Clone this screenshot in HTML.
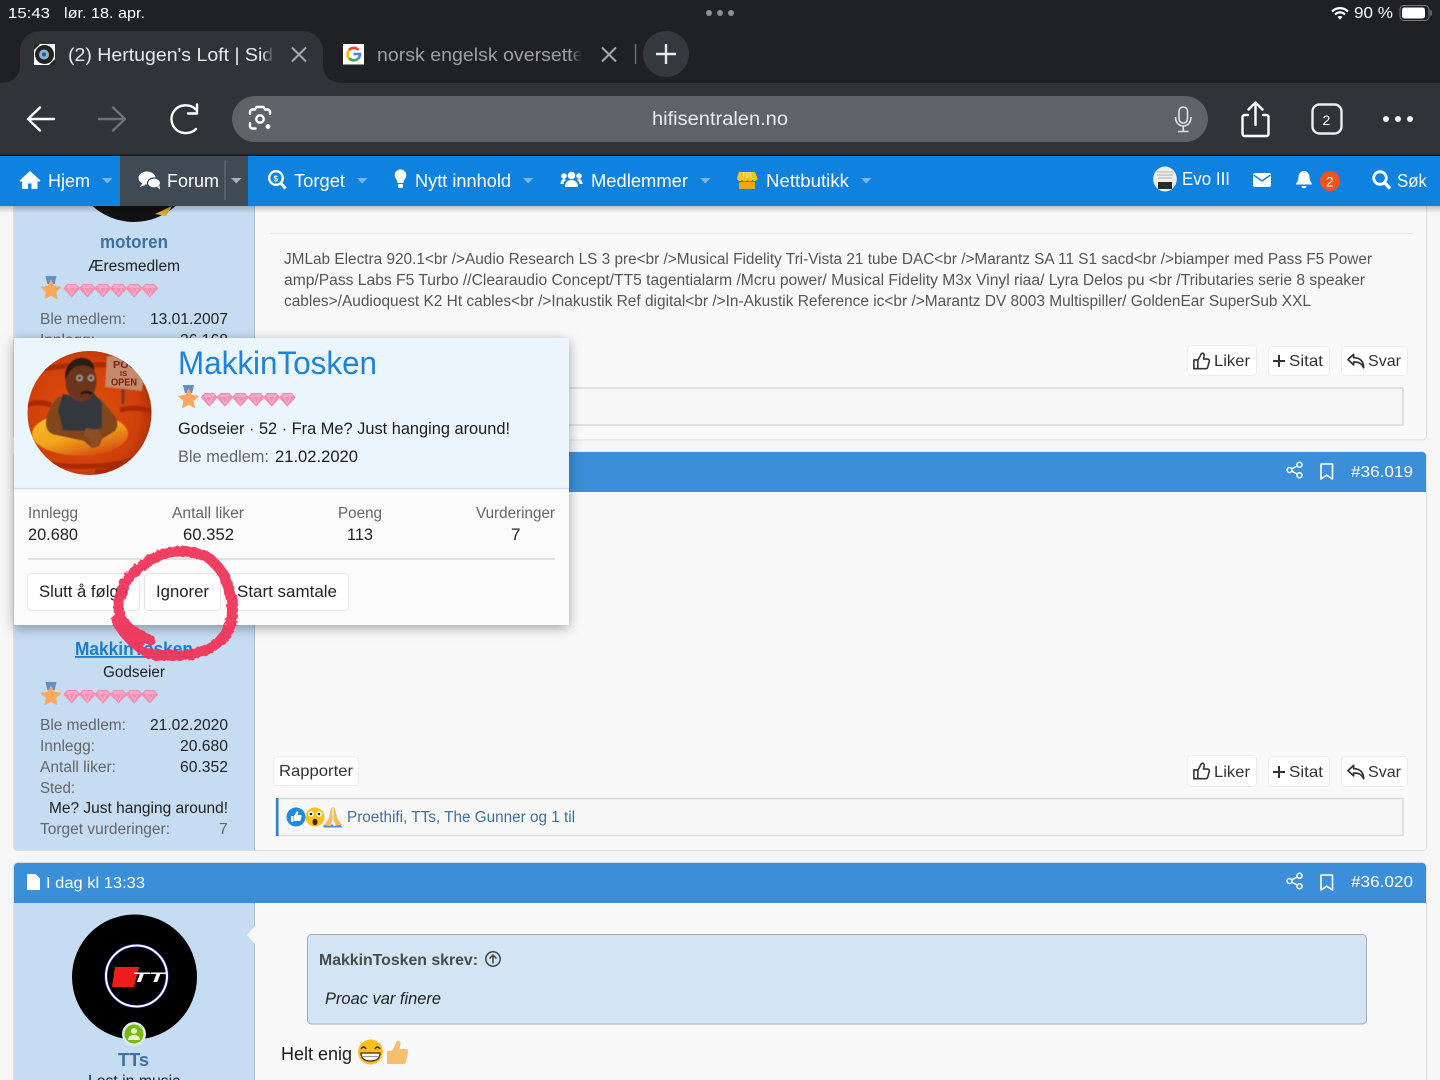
<!DOCTYPE html>
<html lang="no"><head><meta charset="utf-8"><title>Hertugen's Loft</title>
<style>
html,body{margin:0;padding:0;background:#f6f6f6;width:1440px;height:1080px;overflow:hidden}
svg{display:block}
text{font-family:"Liberation Sans",sans-serif;font-size:15.5px;fill:#222;white-space:pre}
.g{fill:#666}.m{fill:#555}.w{fill:#fff}.b{font-weight:700}
.n{font-size:18.5px;fill:#fff}.btn{fill:#fff;stroke:#ececec;stroke-width:1}
.i{fill:none;stroke:#fff;stroke-width:2.4;stroke-linecap:round;stroke-linejoin:round}
.d{fill:none;stroke:#333;stroke-width:1.8;stroke-linejoin:round;stroke-linecap:round}
.s{font-size:16px}
</style></head><body>
<svg width="1440" height="1080" viewBox="0 0 1440 1080" xmlns="http://www.w3.org/2000/svg">
<defs>
<linearGradient id="f1"><stop offset="0" stop-color="#303438" stop-opacity="0"/><stop offset="1" stop-color="#303438"/></linearGradient>
<linearGradient id="f2"><stop offset="0" stop-color="#202124" stop-opacity="0"/><stop offset="1" stop-color="#202124"/></linearGradient>
<linearGradient id="sh" x1="0" y1="0" x2="0" y2="1"><stop offset="0" stop-color="#000" stop-opacity=".22"/><stop offset="1" stop-color="#000" stop-opacity="0"/></linearGradient>
<radialGradient id="lava" cx=".45" cy=".5" r=".65"><stop offset="0" stop-color="#e2530f"/><stop offset=".7" stop-color="#cf3f0a"/><stop offset="1" stop-color="#8e2606"/></radialGradient>
<linearGradient id="yl" x1="0" y1="0" x2=".6" y2="1"><stop offset="0" stop-color="#f6c22a"/><stop offset=".6" stop-color="#f3a51c"/><stop offset="1" stop-color="#d9560f"/></linearGradient>
<filter id="ps" x="-10%" y="-10%" width="120%" height="125%"><feDropShadow dx="0" dy="3" stdDeviation="6" flood-color="#000" flood-opacity=".35"/></filter>
<filter id="soft"><feGaussianBlur stdDeviation=".55"/></filter>
<filter id="rough" x="-10%" y="-10%" width="120%" height="120%"><feTurbulence type="fractalNoise" baseFrequency=".22" numOctaves="2" seed="4"/><feDisplacementMap in="SourceGraphic" scale="4"/></filter>
<clipPath id="av"><circle cx="89.5" cy="413" r="62"/></clipPath>
<clipPath id="page"><rect x="0" y="206" width="1440" height="874"/></clipPath>
<g id="gem"><path d="M3.500 .5h8.500l3.500 3.800L7.800 12.800 0 4.300z" fill="#f28fb3" stroke="#f28fb3" stroke-width="1.200" stroke-linejoin="round"/><path d="M3.800 1h8l2 3H1.800z" fill="#f7a9c5"/><path d="M4.500 4.300l3.300 6.500 3.200-6.500" fill="none" stroke="#f8bdd2" stroke-width=".8"/></g>
<g id="rank">
 <path d="M-5.500-12h11l-1.800 8h-7.400z" fill="#5f90c8"/>
 <path transform="translate(0 2)" d="M0-10l3 6.200 6.800 1-5 4.700 1.300 6.800L0 5.500l-6.100 3.200 1.300-6.800-5-4.700 6.800-1z" fill="#f9a860" stroke="#f9a860" stroke-width=".8" stroke-linejoin="round"/>
 <use href="#gem" x="13" y="-4"/><use href="#gem" x="28.600" y="-4"/><use href="#gem" x="44.200" y="-4"/><use href="#gem" x="59.800" y="-4"/><use href="#gem" x="75.400" y="-4"/><use href="#gem" x="91" y="-4"/>
</g>
<g id="like"><path class="d" transform="scale(.88)" d="M1 9h4.500v10H1zM5.500 9.500L9.500 2c1.500-1.500 3.500 0 3.200 2l-.7 4h4.500c1.800 0 2.300 1.500 1.900 3l-1.800 6.500c-.3 1-.9 1.500-2 1.500H5.500"/></g>
<g id="reply"><path class="d" transform="scale(.95)" d="M7 2.500L1 8l6 5.500V10.500c5 0 8 1 10.500 6 0-6.500-3.500-10.500-10.500-10.500z"/></g>
<g id="plus"><path d="M0 6h12M6 0v12" stroke="#333" stroke-width="2" fill="none"/></g>
<g id="share"><circle cx="3" cy="8" r="2.500" fill="none" stroke="#fff" stroke-width="1.500"/><circle cx="13" cy="2.800" r="2.500" fill="none" stroke="#fff" stroke-width="1.500"/><circle cx="13" cy="13.200" r="2.500" fill="none" stroke="#fff" stroke-width="1.500"/><path d="M5.300 6.800l5.400-2.800M5.300 9.200l5.400 2.800" stroke="#fff" stroke-width="1.500"/></g>
<g id="mark"><path d="M1 1h11.500v15l-5.750-3.800L1 16z" fill="none" stroke="#fff" stroke-width="1.600" stroke-linejoin="round"/></g>
<path id="tri" d="M0 0h10.500L5.250 5.500z"/>
</defs>

<rect width="1440" height="1080" fill="#f6f6f6"/>

<!-- page -->
<g clip-path="url(#page)">
 <rect x="13.500" y="190" width="1413" height="250" rx="4" fill="#f9f9f9" stroke="#dddddd"/>
 <rect x="14" y="190" width="241" height="250" fill="#c5dcf3"/>
 <path d="M254.500 190v250" stroke="#a9c3dc"/>
 <circle cx="134" cy="160" r="62" fill="#111"/>
 <path d="M155 214l17-8-6 10z" fill="#d8a928"/>
 <path d="M270 233.500h1143" stroke="#e3e3e3"/>
 <text x="100" y="248" class="b" style="font-size:18px;fill:#3f719f" textLength="68" lengthAdjust="spacingAndGlyphs">motoren</text>
 <text x="88" y="271" textLength="92" lengthAdjust="spacingAndGlyphs">Æresmedlem</text>
 <use href="#rank" x="51" y="288"/>
 <text x="40" y="324" class="g" textLength="86" lengthAdjust="spacingAndGlyphs">Ble medlem:</text>
 <text x="150" y="324" textLength="78" lengthAdjust="spacingAndGlyphs">13.01.2007</text>
 <text x="40" y="345" class="g" textLength="55" lengthAdjust="spacingAndGlyphs">Innlegg:</text>
 <text x="180" y="345" textLength="48" lengthAdjust="spacingAndGlyphs">26.168</text>

 <text x="284" y="264" class="m" textLength="1088" lengthAdjust="spacingAndGlyphs">JMLab Electra 920.1&lt;br /&gt;Audio Research LS 3 pre&lt;br /&gt;Musical Fidelity Tri-Vista 21 tube DAC&lt;br /&gt;Marantz SA 11 S1 sacd&lt;br /&gt;biamper med Pass F5 Power</text>
 <text x="284" y="285" class="m" textLength="1081" lengthAdjust="spacingAndGlyphs">amp/Pass Labs F5 Turbo //Clearaudio Concept/TT5 tagentialarm /Mcru power/ Musical Fidelity M3x Vinyl riaa/ Lyra Delos pu &lt;br /Tributaries serie 8 speaker</text>
 <text x="284" y="306" class="m" textLength="1027" lengthAdjust="spacingAndGlyphs">cables&gt;/Audioquest K2 Ht cables&lt;br /&gt;Inakustik Ref digital&lt;br /&gt;In-Akustik Reference ic&lt;br /&gt;Marantz DV 8003 Multispiller/ GoldenEar SuperSub XXL</text>

 <rect x="1187.500" y="345.500" width="69" height="30" rx="4" class="btn"/>
 <rect x="1268.500" y="346.500" width="61" height="29" rx="4" class="btn"/>
 <rect x="1341.500" y="346.500" width="66" height="29" rx="4" class="btn"/>
 <use href="#like" x="1193" y="352"/>
 <text x="1214" y="366" class="s" style="fill:#333" textLength="36" lengthAdjust="spacingAndGlyphs">Liker</text>
 <use href="#plus" x="1273" y="355"/>
 <text x="1289" y="366" class="s" style="fill:#333" textLength="34" lengthAdjust="spacingAndGlyphs">Sitat</text>
 <use href="#reply" x="1347" y="352"/>
 <text x="1368" y="366" class="s" style="fill:#333" textLength="33" lengthAdjust="spacingAndGlyphs">Svar</text>
 <rect x="560" y="388" width="843" height="37" fill="#f7f7f7" stroke="#d9d9d9" stroke-width="1.500"/>

 <!-- post 2 -->
 <rect x="13.500" y="452" width="1413" height="398.500" rx="4" fill="#f9f9f9" stroke="#dddddd"/>
 <rect x="14" y="492" width="241" height="358" fill="#c5dcf3"/>
 <path d="M254.500 492v358" stroke="#a9c3dc"/>
 <path d="M14 492v-36a4 4 0 0 1 4-4h1404a4 4 0 0 1 4 4v36z" fill="#3a8fd8"/>
 <use href="#share" x="1286.500" y="462"/><use href="#mark" x="1320" y="463"/>
 <text x="1351" y="477" class="s w" textLength="62" lengthAdjust="spacingAndGlyphs">#36.019</text>

 <text x="75" y="655" class="b" style="font-size:18px;fill:#1a7ccf;text-decoration:underline" textLength="118" lengthAdjust="spacingAndGlyphs">MakkinTosken</text>
 <text x="103" y="677" textLength="62" lengthAdjust="spacingAndGlyphs">Godseier</text>
 <use href="#rank" x="51" y="694"/>
 <text x="40" y="730" class="g" textLength="86" lengthAdjust="spacingAndGlyphs">Ble medlem:</text><text x="150" y="730" textLength="78" lengthAdjust="spacingAndGlyphs">21.02.2020</text>
 <text x="40" y="751" class="g" textLength="55" lengthAdjust="spacingAndGlyphs">Innlegg:</text><text x="180" y="751" textLength="48" lengthAdjust="spacingAndGlyphs">20.680</text>
 <text x="40" y="772" class="g" textLength="76" lengthAdjust="spacingAndGlyphs">Antall liker:</text><text x="180" y="772" textLength="48" lengthAdjust="spacingAndGlyphs">60.352</text>
 <text x="40" y="793" class="g" textLength="35" lengthAdjust="spacingAndGlyphs">Sted:</text>
 <text x="49" y="813" textLength="179" lengthAdjust="spacingAndGlyphs">Me? Just hanging around!</text>
 <text x="40" y="834" class="g" textLength="130" lengthAdjust="spacingAndGlyphs">Torget vurderinger:</text><text x="219" y="834" class="g">7</text>

 <rect x="273.500" y="756.500" width="85" height="29" rx="4" class="btn"/>
 <text x="279" y="776" class="s" style="fill:#333" textLength="74" lengthAdjust="spacingAndGlyphs">Rapporter</text>
 <rect x="1187.500" y="755.500" width="69" height="31" rx="4" class="btn"/>
 <rect x="1268.500" y="756.500" width="61" height="30" rx="4" class="btn"/>
 <rect x="1341.500" y="756.500" width="66" height="30" rx="4" class="btn"/>
 <use href="#like" x="1193" y="762"/>
 <text x="1214" y="777" class="s" style="fill:#333" textLength="36" lengthAdjust="spacingAndGlyphs">Liker</text>
 <use href="#plus" x="1273" y="766"/>
 <text x="1289" y="777" class="s" style="fill:#333" textLength="34" lengthAdjust="spacingAndGlyphs">Sitat</text>
 <use href="#reply" x="1347" y="763"/>
 <text x="1368" y="777" class="s" style="fill:#333" textLength="33" lengthAdjust="spacingAndGlyphs">Svar</text>
 <rect x="276" y="798.500" width="1127" height="37" fill="#f7f7f7" stroke="#d9d9d9" stroke-width="1.500"/>
 <rect x="276" y="798" width="2.500" height="38" fill="#2a7fd0"/>
 <circle cx="296" cy="817" r="9.500" fill="#1e8be0"/>
 <path d="M291 816h2.500v6H291zM294 816l3-5c1 0 1.500 1 1.200 2l-.4 2h3c.8 0 1 1 .7 1.500l-1 4c-.2.500-.5.500-1 .500h-5.500z" fill="#fff"/>
 <circle cx="315" cy="817" r="9.500" fill="#fcc21b"/>
 <circle cx="311" cy="814" r="2.800" fill="#fff"/><circle cx="319" cy="814" r="2.800" fill="#fff"/><circle cx="311" cy="814" r="1.300" fill="#222"/><circle cx="319" cy="814" r="1.300" fill="#222"/>
 <ellipse cx="315" cy="822" rx="2.500" ry="3.300" fill="#4a2508"/>
 <path d="M332.500 807c-1.500 1-2 3-2.500 6l-1.500 6-4.500 6 6 1 2.500-6zM333.500 807c1.500 1 2 3 2.500 6l1.500 6 4.500 6-6 1-2.500-6z" fill="#f2bc66"/>
 <path d="M323.500 825l6.500 1 2-2 2 2 6.500-1 2 2.500h-19z" fill="#4b8fd0"/>
 <text x="347" y="822" style="fill:#3f719f" textLength="228" lengthAdjust="spacingAndGlyphs">Proethifi, TTs, The Gunner og 1 til</text>

 <!-- post 3 -->
 <rect x="13.500" y="862.500" width="1413" height="240" rx="4" fill="#f9f9f9" stroke="#dddddd"/>
 <rect x="14" y="903" width="241" height="180" fill="#c5dcf3"/>
 <path d="M254.500 903v180" stroke="#a9c3dc"/>
 <path d="M14 903v-36a4 4 0 0 1 4-4h1404a4 4 0 0 1 4 4v36z" fill="#3a8fd8"/>
 <path d="M247 935l8-9v18z" fill="#f9f9f9"/>
 <path d="M27 874h8.500l4.500 4.500V890H27z" fill="#fff"/>
 <text x="46" y="888" class="s w" textLength="99" lengthAdjust="spacingAndGlyphs">I dag kl 13:33</text>
 <use href="#share" x="1286.500" y="873"/><use href="#mark" x="1320" y="874"/>
 <text x="1351" y="887" class="s w" textLength="62" lengthAdjust="spacingAndGlyphs">#36.020</text>
 <circle cx="134.500" cy="977" r="62.500" fill="#000"/>
 <circle cx="136.500" cy="976" r="30.500" fill="none" stroke="#22228a" stroke-width="3.500"/>
 <circle cx="136.500" cy="976" r="30.500" fill="none" stroke="#fff" stroke-width="2"/>
 <path d="M115 967h24l-5 20h-22z" fill="#f01c1c"/>
 <text x="132" y="982" class="b w" style="font-size:14px;font-style:italic" textLength="33" lengthAdjust="spacingAndGlyphs">TT</text>
 <circle cx="134" cy="1034" r="12" fill="#dcecf7"/><circle cx="134" cy="1034" r="9.500" fill="#7cb800"/>
 <circle cx="134" cy="1031" r="3" fill="#e8f3d0"/><path d="M128 1040c.5-4 3-5 6-5s5.500 1 6 5z" fill="#e8f3d0"/>
 <text x="118" y="1066" class="b" style="font-size:18px;fill:#3f719f" textLength="31" lengthAdjust="spacingAndGlyphs">TTs</text>
 <text x="88" y="1086" textLength="92" lengthAdjust="spacingAndGlyphs">Lost in music</text>
 <rect x="307.500" y="934.500" width="1059" height="89.500" rx="4" fill="#d3e5f5" stroke="#9eafc0"/>
 <text x="319" y="965" class="b" style="font-size:16px;fill:#4a4a4a" textLength="159" lengthAdjust="spacingAndGlyphs">MakkinTosken skrev:</text>
 <circle cx="493" cy="959" r="7.200" fill="none" stroke="#444" stroke-width="1.500"/>
 <path d="M493 963.500v-8.500M489.500 958.500l3.500-3.500 3.500 3.500" fill="none" stroke="#444" stroke-width="1.500"/>
 <text x="325" y="1004" style="font-style:italic;font-size:17px" textLength="116" lengthAdjust="spacingAndGlyphs">Proac var finere</text>
 <text x="281" y="1060" style="font-size:18px;fill:#1c1c1c" textLength="71" lengthAdjust="spacingAndGlyphs">Helt enig</text>
 <circle cx="370.500" cy="1052" r="12.500" fill="#fcbe1e"/>
 <path d="M361 1049q2.500-4 5 0M375 1049q2.500-4 5 0" fill="none" stroke="#40250e" stroke-width="1.500"/>
 <path d="M361 1053h19c0 6-4 8-9.500 8s-9.500-2-9.500-8z" fill="#fff" stroke="#40250e" stroke-width="1.200"/>
 <path d="M361.500 1056.500h18" stroke="#999" stroke-width="1"/>
 <path d="M387 1051h5v13h-5zM392 1051l5-10c2-1 4 0 3.500 3l-1 5h6.500c2 0 2.500 2 2 3.500l-2 9c-.5 1.500-1 2.500-3 2.500H392z" fill="#f4c06c"/>
</g>

<!-- popup -->
<g filter="url(#ps)"><rect x="14" y="338" width="555" height="287" fill="#fbfbfb"/></g>
<rect x="14" y="338" width="555" height="150" fill="#ebf5fe"/>
<path d="M14 488.500h555" stroke="#d7d9db" stroke-width="1.500"/>
<g clip-path="url(#av)">
 <rect x="27" y="351" width="125" height="125" fill="url(#lava)"/>
 <g filter="url(#soft)">
 <path d="M27 372c30-8 90-10 125-3M27 405c8-3 16-3 24 0M120 410c10-3 20-2 32 1M27 458c30 12 90 12 125-5M95 472c20-2 40-8 60-22" stroke="#a82c06" stroke-width="5" fill="none"/>
 <path d="M123 388v16" stroke="#7a3a20" stroke-width="3"/>
 <path d="M107 356l40 2-5 33-37-4z" fill="#c48a6a"/>
 <ellipse cx="80" cy="434" rx="48" ry="21.500" fill="url(#yl)"/>
 <path d="M58 397c-7 8-11 16-12 24-1 8 3 13 10 14l28 6 8 7 7-2 3-7 13-8c4-5 3-11-1-16l-14-17z" fill="#82441f"/>
 <path d="M63 394l9 2 16-3 4-2 10 12v25c-14 4-27 3-39 2l-5-20z" fill="#33373b"/>
 <ellipse cx="81" cy="381" rx="15.500" ry="21" fill="#6b361b"/>
 <path d="M65.500 380c-2-15 8-22 16-22 8 0 13 5 13 12-5-4-10-5-16-4-6 1-10 6-13 14z" fill="#2a1a15"/>
 <circle cx="79.500" cy="378" r="3.400" fill="#a39283"/><circle cx="91" cy="378" r="3.400" fill="#a39283"/>
 <circle cx="79.500" cy="378" r="1.400" fill="#3a2115"/><circle cx="91" cy="378" r="1.400" fill="#3a2115"/>
 <path d="M81 394q6-4 11 0" stroke="#2b1008" stroke-width="2.500" fill="none"/>
 <path d="M86 428l12 2 4 6-6 12-4-1-2-7-6-5z" fill="#8f4e27"/>
 </g>
 <text x="113" y="368" style="font-size:10.500px;font-weight:700;fill:#7a1f14" textLength="24" lengthAdjust="spacingAndGlyphs">POO</text>
 <text x="120" y="376" style="font-size:7.500px;font-weight:700;fill:#7a1f14">IS</text>
 <text x="111" y="385.500" style="font-size:10.500px;font-weight:700;fill:#7a1f14" textLength="26" lengthAdjust="spacingAndGlyphs">OPEN</text>
</g>
<text x="178" y="374" style="font-size:32px;fill:#1f82d6" textLength="199" lengthAdjust="spacingAndGlyphs">MakkinTosken</text>
<use href="#rank" x="188.500" y="397"/>
<text x="178" y="434" style="font-size:17px;fill:#1c1c1c" textLength="332" lengthAdjust="spacingAndGlyphs">Godseier · 52 · Fra Me? Just hanging around!</text>
<text x="178" y="462" class="g" style="font-size:17px" textLength="91" lengthAdjust="spacingAndGlyphs">Ble medlem:</text>
<text x="275" y="462" style="font-size:17px;fill:#1c1c1c" textLength="83" lengthAdjust="spacingAndGlyphs">21.02.2020</text>
<text x="28" y="518" class="g" textLength="50" lengthAdjust="spacingAndGlyphs">Innlegg</text>
<text x="172" y="518" class="g" textLength="72" lengthAdjust="spacingAndGlyphs">Antall liker</text>
<text x="338" y="518" class="g" textLength="44" lengthAdjust="spacingAndGlyphs">Poeng</text>
<text x="476" y="518" class="g" textLength="79" lengthAdjust="spacingAndGlyphs">Vurderinger</text>
<text x="28" y="540" style="font-size:17px" textLength="50" lengthAdjust="spacingAndGlyphs">20.680</text>
<text x="183" y="540" style="font-size:17px" textLength="51" lengthAdjust="spacingAndGlyphs">60.352</text>
<text x="347" y="540" style="font-size:17px" textLength="26" lengthAdjust="spacingAndGlyphs">113</text>
<text x="511" y="540" style="font-size:17px">7</text>
<path d="M28 559h527" stroke="#d8d8d8" stroke-width="1.500"/>
<rect x="27.500" y="573.500" width="112" height="37" rx="4" fill="#fff" stroke="#e6e6e6"/>
<rect x="144.500" y="573.500" width="76" height="37" rx="4" fill="#fff" stroke="#e6e6e6"/>
<rect x="225.500" y="573.500" width="123" height="37" rx="4" fill="#fff" stroke="#e6e6e6"/>
<text x="39" y="597" style="font-size:17px" textLength="89" lengthAdjust="spacingAndGlyphs">Slutt å følge</text>
<text x="156" y="597" style="font-size:17px" textLength="53" lengthAdjust="spacingAndGlyphs">Ignorer</text>
<text x="237" y="597" style="font-size:17px" textLength="100" lengthAdjust="spacingAndGlyphs">Start samtale</text>

<!-- red circle -->
<g filter="url(#rough)" fill="none" stroke="#f1345a" stroke-linecap="round" stroke-linejoin="round" opacity=".95">
 <path d="M193 553C203 554 209 557 213 562C221 569 226 578 228 587C232 597 233 605 232 613C232 623 229 631 223 637C216 645 208 650 200 652C190 655 181 656 173 655C163 656 154 655 147 653" stroke-width="10.500"/>
 <path d="M193 553C181 550 170 551 160 555C150 560 141 566 133 573C127 579 123 586 122 593C118 602 118 610 120 617C125 628 137 634 150 640" stroke-width="10.500"/>
 <path d="M115 620C120 630 126 638 135 645C140 650 144 652 150 654" stroke-width="8"/>
 <path d="M125 622l15 22" stroke-width="9"/>
</g>

<!-- nav shadow -->
<rect y="206" width="1440" height="7" fill="url(#sh)"/>

<!-- browser chrome -->
<rect width="1440" height="83" fill="#202124"/>
<rect y="83" width="1440" height="72" fill="#303438"/>
<rect y="154.500" width="1440" height="1.500" fill="#15171a"/>
<path d="M0 83c12 0 20-6 20-18V51c0-11 9-20 20-20h263c11 0 20 9 20 20v14c0 12 8 18 20 18z" fill="#303438"/>
<text x="8" y="18" class="w" style="font-size:15px" textLength="42" lengthAdjust="spacingAndGlyphs">15:43</text>
<text x="64" y="18" class="w" style="font-size:15px" textLength="81" lengthAdjust="spacingAndGlyphs">lør. 18. apr.</text>
<circle cx="709" cy="13" r="3" fill="#8d9094"/><circle cx="720" cy="13" r="3" fill="#8d9094"/><circle cx="731" cy="13" r="3" fill="#8d9094"/>
<path d="M1332 11.500c4.500-4.500 11.500-4.500 16 0M1335 14.500c3-2.800 7-2.800 10 0" fill="none" stroke="#fff" stroke-width="2.200"/><path d="M1337.500 17c1.500-1.300 3.500-1.300 5 0l-2.500 2.800z" fill="#fff"/>
<text x="1354" y="18" class="w" style="font-size:15.500px" textLength="39" lengthAdjust="spacingAndGlyphs">90 %</text>
<rect x="1400" y="5.500" width="29" height="15" rx="4" fill="none" stroke="#777" stroke-width="1"/>
<rect x="1402" y="7.500" width="23" height="11" rx="2.500" fill="#fff"/><path d="M1431 10.500v5" stroke="#777" stroke-width="1.500"/>

<!-- tabs -->
<rect x="34" y="44" width="21" height="21" fill="#fff"/><path d="M34 44h6l-6 6zM55 65h-6l6-6z" fill="#222"/>
<circle cx="44.500" cy="54.500" r="9.500" fill="#222"/><circle cx="44" cy="54.500" r="5" fill="#8cb4cf"/><circle cx="44" cy="54.500" r="2.200" fill="#16a"/>
<text x="68" y="61" style="font-size:18.500px;fill:#e8eaed" textLength="216" lengthAdjust="spacingAndGlyphs">(2) Hertugen's Loft | Side</text>
<rect x="262" y="40" width="12" height="30" fill="url(#f1)"/><rect x="274" y="40" width="18" height="30" fill="#303438"/>
<path d="M292 47.500l14 14M306 47.500l-14 14" stroke="#a5a8ac" stroke-width="2" fill="none"/>
<rect x="343" y="44" width="21" height="20.500" fill="#fff"/>
<path d="M358.500 50a6.500 6.500 0 0 0-9.500 0" fill="none" stroke="#ea4335" stroke-width="2.600"/>
<path d="M349 50a6.500 6.500 0 0 0 0 8.200" fill="none" stroke="#fbbc05" stroke-width="2.600"/>
<path d="M349 58.200a6.500 6.500 0 0 0 8.700 .8" fill="none" stroke="#34a853" stroke-width="2.600"/>
<path d="M353.500 54h6.500a6.500 6.500 0 0 1-2.300 5" fill="none" stroke="#4285f4" stroke-width="2.600"/>
<text x="377" y="61" style="font-size:18.500px;fill:#9aa0a6" textLength="213" lengthAdjust="spacingAndGlyphs">norsk engelsk oversetter</text>
<rect x="570" y="40" width="12" height="30" fill="url(#f2)"/><rect x="582" y="40" width="18" height="30" fill="#202124"/>
<path d="M602 47.500l14 14M616 47.500l-14 14" stroke="#a5a8ac" stroke-width="2" fill="none"/>
<path d="M635.500 44v20" stroke="#6a6d71" stroke-width="1.500"/>
<circle cx="666" cy="54" r="23" fill="#35383c"/><path d="M656 54h20M666 44v20" stroke="#e8eaed" stroke-width="2.400" fill="none"/>

<!-- toolbar -->
<path d="M54 119H28M40 107.500L28 119l12 11.500" class="i" stroke-width="2.600"/>
<path d="M99 119h26M113 107.500L125 119l-12 11.500" class="i" style="stroke:#6e7276"/>
<path d="M196 109.500c-6-6-17-5.500-22 1.500-6 9-.5 21 10 22 5 .5 9-1 12-4" class="i"/><path d="M197 104.500v9h-9" class="i"/>
<rect x="232" y="96" width="976" height="46" rx="23" fill="#5f6368"/>
<path d="M250 114v-2c0-1.500 1-2.500 2.500-2.500h2M265.500 109.500h2c1.500 0 2.500 1 2.500 2.500v2M250 123v3c0 1.500 1 2.500 2.500 2.500h3M270 121.500" class="i"/>
<path d="M255 109.500l1.500-2.500h7l1.500 2.500" class="i"/>
<circle cx="260" cy="119" r="3.700" class="i"/><circle cx="268" cy="126.500" r="2.400" fill="#fff"/>
<text x="652" y="125" style="font-size:19px;fill:#e8eaed" textLength="136" lengthAdjust="spacingAndGlyphs">hifisentralen.no</text>
<rect x="1179" y="107" width="8.500" height="16" rx="4.200" fill="none" stroke="#e0e2e4" stroke-width="1.600"/>
<path d="M1175.500 117c0 12 15.500 12 15.500 0M1183.250 126v5M1178 131.500h10.500" fill="none" stroke="#e0e2e4" stroke-width="1.600"/>
<path d="M1248 115h-3.500a2 2 0 0 0-2 2v17a2 2 0 0 0 2 2h22a2 2 0 0 0 2-2v-17a2 2 0 0 0-2-2H1263M1255.500 125v-22M1248.500 109.500l7-7 7 7" class="i"/>
<rect x="1312.500" y="104.500" width="29" height="29" rx="7" fill="none" stroke="#eee" stroke-width="2.400"/>
<text x="1322.500" y="125" class="w b" style="font-size:14px;font-weight:400">2</text>
<circle cx="1386" cy="119" r="3" fill="#f0f0f0"/><circle cx="1398" cy="119" r="3" fill="#f0f0f0"/><circle cx="1410" cy="119" r="3" fill="#f0f0f0"/>

<!-- nav -->
<rect y="156" width="1440" height="50" fill="#0f81de"/>
<rect x="120" y="156" width="128" height="50" fill="#3f4a55"/>
<path d="M225 161v39" stroke="#6a747d"/>
<use href="#tri" x="102" y="178" fill="#7fb6ea"/><use href="#tri" x="231" y="178" fill="#a9b0b7"/><use href="#tri" x="357" y="178" fill="#7fb6ea"/><use href="#tri" x="523" y="178" fill="#7fb6ea"/><use href="#tri" x="700" y="178" fill="#7fb6ea"/><use href="#tri" x="861" y="178" fill="#7fb6ea"/>
<path d="M30 171l10.500 9.500-1.500 1.500-1.500-1.300V189h-6v-5.500h-3.500V189h-6v-8.300L21 182l-1.500-1.500z" fill="#fff"/>
<ellipse cx="147" cy="178" rx="8.500" ry="6.500" fill="#fff"/><path d="M143 183l-3.500 4 6-2z" fill="#fff"/>
<ellipse cx="154" cy="183" rx="6.500" ry="5" fill="#fff" stroke="#3f4a55" stroke-width="1.200"/><path d="M157 187l3 2.500-.5-4z" fill="#fff"/>
<circle cx="276" cy="178" r="6.800" fill="none" stroke="#fff" stroke-width="2.400"/><path d="M281 183.500l4.500 5" stroke="#fff" stroke-width="3"/><text x="273.500" y="181.500" class="w b" style="font-size:8px">$</text>
<path d="M395 177a5.800 5.800 0 1 1 11 0c-.8 2-2.500 3.500-2.500 6h-6c0-2.500-1.700-4-2.500-6z" fill="#fff"/><rect x="398" y="184" width="5" height="4" rx="1" fill="#fff"/>
<circle cx="571.500" cy="175.500" r="3.800" fill="#fff"/><circle cx="564" cy="176" r="2.800" fill="#fff"/><circle cx="579" cy="176" r="2.800" fill="#fff"/><path d="M565 187c0-5 3-7 6.500-7s6.500 2 6.500 7zM560.500 184c0-3 1.500-5 4-5l1.500 1c-1.500 1-2.500 2.500-2.500 4zM582.500 184c0-3-1.500-5-4-5l-1.500 1c1.500 1 2.500 2.500 2.500 4z" fill="#fff"/>
<path d="M739 172h16l2.500 6c0 3-3.500 4-5 2-1.500 2-4 2-5 0-1.500 2-4 2-5.500 0-1.500 2-5 1-5-2z" fill="#ffc21a"/><rect x="739" y="182" width="16" height="7" fill="#eea80e"/><path d="M744 172l-1 6M750 172l1 6M747 172v6" stroke="#fff" stroke-width=".7"/>
<text x="48" y="187" class="n" textLength="42" lengthAdjust="spacingAndGlyphs">Hjem</text>
<text x="167" y="187" class="n" textLength="52" lengthAdjust="spacingAndGlyphs">Forum</text>
<text x="294" y="187" class="n" textLength="51" lengthAdjust="spacingAndGlyphs">Torget</text>
<text x="415" y="187" class="n" textLength="96" lengthAdjust="spacingAndGlyphs">Nytt innhold</text>
<text x="591" y="187" class="n" textLength="97" lengthAdjust="spacingAndGlyphs">Medlemmer</text>
<text x="766" y="187" class="n" textLength="83" lengthAdjust="spacingAndGlyphs">Nettbutikk</text>
<ellipse cx="1165" cy="179" rx="11.800" ry="12.500" fill="#eeeeea"/><path d="M1157 172h16M1157 175h16M1158 178h14" stroke="#999" stroke-width=".8"/><rect x="1158" y="182" width="14" height="7" fill="#2a2a2a"/>
<text x="1182" y="185" class="n" textLength="48" lengthAdjust="spacingAndGlyphs">Evo III</text>
<rect x="1253" y="173" width="18" height="14" rx="2" fill="#fff"/><path d="M1253.500 175l8.500 6 8.500-6" fill="none" stroke="#0f81de" stroke-width="1.500"/>
<path d="M1304 171c-3.500 0-5.500 3-5.500 6 0 4-2.500 6-2.500 7.500h16c0-1.500-2.500-3.500-2.500-7.500 0-3-2-6-5.500-6zM1301.500 186h5c0 3-5 3-5 0z" fill="#fff"/>
<circle cx="1330" cy="181" r="10" fill="#f4511e"/><text x="1326" y="186.500" class="w" style="font-size:13.500px">2</text>
<circle cx="1380" cy="178" r="6.300" fill="none" stroke="#fff" stroke-width="2.800"/><path d="M1385 183l5 5.500" stroke="#fff" stroke-width="3.400"/>
<text x="1397" y="187" class="n" textLength="30" lengthAdjust="spacingAndGlyphs">Søk</text>
</svg>
</body></html>
